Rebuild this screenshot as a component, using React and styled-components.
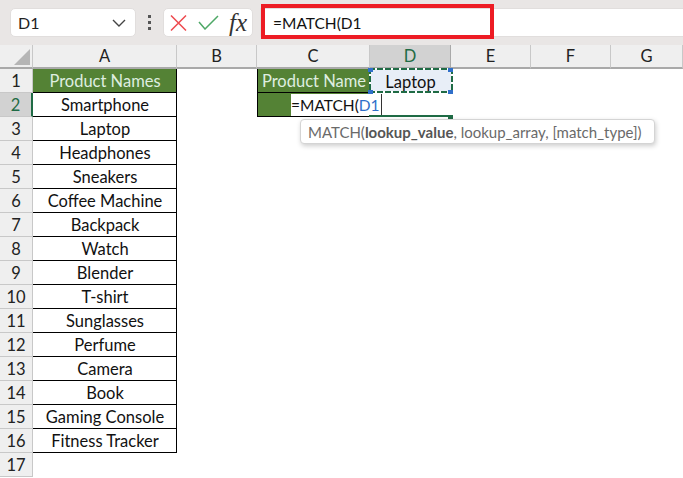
import React from 'react'
import styled, { createGlobalStyle } from 'styled-components'

const GlobalStyle = createGlobalStyle`
  html, body { margin: 0; padding: 0; background: #fff; overflow: hidden; }
  body { font-family: Lato, "Open Sans", sans-serif; }
`

const Page = styled.div`
  width: 683px;
  height: 478px;
  overflow: hidden;
  display: flex;
  flex-direction: column;
`

const FormulaBar = styled.div`
  height: 45px;
  background: #e9e6e5;
  display: flex;
  align-items: center;
  flex: none;
  padding: 0 0 0 10px;
  box-sizing: border-box;
`

const NameBox = styled.div`
  width: 126px;
  height: 29px;
  box-sizing: border-box;
  background: #fff;
  border: 1px solid #e1dedd;
  border-radius: 5px;
  display: flex;
  align-items: center;
  justify-content: space-between;
  padding: 0 9px 0 7px;
  font-size: 16px;
  color: #222;
`

const Dots = styled.div`
  width: 27px;
  display: flex;
  flex-direction: column;
  align-items: center;
  gap: 3px;
  span { width: 3px; height: 3px; background: #555; }
`

const IconBox = styled.div`
  width: 90px;
  height: 29px;
  box-sizing: border-box;
  background: #fff;
  border: 1px solid #e1dedd;
  border-radius: 5px;
  display: flex;
  align-items: center;
  padding-left: 6px;
  svg:first-child { margin-right: 11px; }
  svg:nth-child(2) { margin-right: 10px; }
`

const FormulaInput = styled.div`
  flex: 1;
  height: 29px;
  margin-left: 7px;
  background: #fff;
  border: 1px solid #e1dedd;
  border-right: none;
  box-sizing: border-box;
  position: relative;
  display: flex;
  align-items: center;
  padding-left: 12px;
  font-size: 15.5px;
  color: #111;
`

const RedBox = styled.div`
  position: absolute;
  left: 0;
  top: -5px;
  width: 233px;
  height: 35px;
  box-sizing: border-box;
  border: 4px solid #ed1c24;
`

const Sheet = styled.div`
  position: relative;
  flex: 1;
  display: grid;
  grid-template-columns: 33px 144px 80px 113px 81px 80px 80px 72px;
  grid-auto-rows: 24px;
  align-content: start;
  font-size: 16.5px;
  color: #111;
`

const Corner = styled.div`
  background: #efefef;
  border-right: 1px solid #c8c8c8;
  border-bottom: 2px solid #a9a9a9;
  box-sizing: border-box;
  position: relative;
  &::after {
    content: '';
    position: absolute;
    right: 2px;
    bottom: 2px;
    border-style: solid;
    border-width: 0 0 16px 16px;
    border-color: transparent transparent #b5b5b5 transparent;
  }
`

const ColHead = styled.div`
  background: ${p => (p.$active ? '#d2d2d2' : '#efefef')};
  color: ${p => (p.$active ? '#1f6b45' : '#222')};
  border-right: 1px solid ${p => (p.$active ? '#a9a9a9' : '#c8c8c8')};
  border-bottom: 2px solid #a9a9a9;
  box-sizing: border-box;
  display: flex;
  align-items: center;
  justify-content: center;
`

const RowHead = styled.div`
  background: ${p => (p.$active ? '#d2d2d2' : '#efefef')};
  color: ${p => (p.$active ? '#1f6b45' : '#222')};
  border-right: ${p => (p.$active ? '2px solid #1f6b45' : '1px solid #c8c8c8')};
  border-bottom: 1px solid #c8c8c8;
  box-sizing: border-box;
  padding-top: 1px;
  display: flex;
  align-items: center;
  justify-content: center;
`

const Cell = styled.div`
  box-sizing: border-box;
  padding: 1px 0 0 1px;
  display: flex;
  align-items: center;
  justify-content: center;
  white-space: nowrap;
  overflow: hidden;
  background: ${p => (p.$head ? '#548235' : '#fff')};
  color: ${p => (p.$head ? '#dfeee0' : '#111')};
  ${p => p.$bordered && `
    border-right: 1px solid #000;
    border-bottom: 1px solid #000;
  `}
  ${p => p.$left && 'border-left: 1px solid #000;'}
`

const Blank = styled.div``

const Selected = styled.div`
  background: #e8eef7;
  padding-top: 1px;
  display: flex;
  align-items: center;
  justify-content: center;
`

const dashH = 'repeating-linear-gradient(90deg, #1f6b45 0 6px, #fff 6px 8px)'
const dashV = 'repeating-linear-gradient(180deg, #1f6b45 0 6px, #fff 6px 8px)'

const CopyRange = styled.div`
  position: absolute;
  left: 369px;
  top: 23px;
  width: 84px;
  height: 25px;
  pointer-events: none;
  background:
    ${dashH} left top / 100% 2px no-repeat,
    ${dashH} left bottom / 100% 2px no-repeat,
    ${dashV} left top / 2px 100% no-repeat,
    ${dashV} right top / 2px 100% no-repeat;
`

const Handle = styled.i`
  position: absolute;
  width: 5px;
  height: 4px;
  background: ${p => p.$color || '#2f6fc9'};
  left: ${p => p.$x}px;
  top: ${p => p.$y}px;
`

const CellEditor = styled.div`
  position: absolute;
  left: 291px;
  top: 49px;
  width: 160px;
  height: 22px;
  background: #fff;
  display: flex;
  align-items: center;
  font-size: 15.5px;
  color: #111;
  span { color: #2f6fc9; }
`

const Caret = styled.div`
  width: 1px;
  height: 22px;
  background: #333;
  margin-left: 1px;
`

const ActiveEdge = styled.div`
  position: absolute;
  left: 369px;
  top: 70px;
  width: 84px;
  height: 2px;
  background: #1f6b45;
`

const Tip = styled.div`
  position: absolute;
  left: 300px;
  top: 74px;
  width: 355px;
  height: 25px;
  box-sizing: border-box;
  background: #fff;
  border: 1px solid #d4d4d4;
  border-radius: 4px;
  box-shadow: 1px 2px 5px rgba(0, 0, 0, 0.2);
  display: flex;
  align-items: center;
  padding-left: 7px;
  font-size: 15px;
  color: #6a6a6a;
  white-space: nowrap;
  b { color: #555; font-weight: 700; }
`

const Fx = styled.span`
  font: italic 400 25px "Liberation Serif", serif;
  line-height: 25px;
  color: #333;
`

const products = ['Smartphone', 'Laptop', 'Headphones', 'Sneakers', 'Coffee Machine', 'Backpack', 'Watch', 'Blender', 'T-shirt', 'Sunglasses', 'Perfume', 'Camera', 'Book', 'Gaming Console', 'Fitness Tracker']
const columns = ['A', 'B', 'C', 'D', 'E', 'F', 'G']

export default function App() {
  return (
    <Page>
      <GlobalStyle />
      <FormulaBar>
        <NameBox>
          D1
          <svg width="14" height="8" viewBox="0 0 14 8" fill="none" stroke="#444" strokeWidth="1.4"><path d="M1 1l6 6 6-6" /></svg>
        </NameBox>
        <Dots><span /><span /><span /></Dots>
        <IconBox>
          <svg width="17" height="16" viewBox="0 0 17 16" fill="none" stroke="#ee4b4f" strokeWidth="1.5"><path d="M1 .5l15 15M16 .5l-15 15" /></svg>
          <svg width="21" height="15" viewBox="0 0 21 15" fill="none" stroke="#4ea866" strokeWidth="1.5"><path d="M1 7l6 7L20 1" /></svg>
          <Fx>fx</Fx>
        </IconBox>
        <FormulaInput>
          =MATCH(D1
          <RedBox />
        </FormulaInput>
      </FormulaBar>
      <Sheet>
        <Corner />
        {columns.map(c => <ColHead key={c} $active={c === 'D'}>{c}</ColHead>)}

        <RowHead>1</RowHead>
        <Cell $head $bordered>Product Names</Cell>
        <Blank />
        <Cell $head $bordered $left>Product Name</Cell>
        <Selected>Laptop</Selected>
        <Blank /><Blank /><Blank />

        {products.map((name, i) => (
          <React.Fragment key={name}>
            <RowHead $active={i === 0}>{i + 2}</RowHead>
            <Cell $bordered>{name}</Cell>
            <Blank />
            {i === 0 ? <Cell $head $bordered $left /> : <Blank />}
            <Blank /><Blank /><Blank /><Blank />
          </React.Fragment>
        ))}

        <RowHead>17</RowHead>

        <CopyRange />
        <Handle $x={368} $y={23} />
        <Handle $x={448} $y={23} />
        <Handle $x={368} $y={45} />
        <Handle $x={448} $y={45} />
        <CellEditor>=MATCH(<span>D1</span><Caret /></CellEditor>
        <ActiveEdge />
        <Handle $x={448} $y={70} $color="#1f6b45" />
        <Tip>MATCH(<b>lookup_value</b>, lookup_array, [match_type])</Tip>
      </Sheet>
    </Page>
  )
}
